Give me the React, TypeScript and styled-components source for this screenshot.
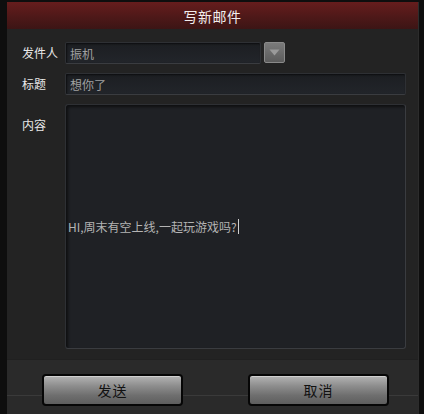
import React from "react";
import styled, { createGlobalStyle } from "styled-components";

const Global = createGlobalStyle`
  html, body { margin: 0; padding: 0; background: #111; }
  body { font-family: "Noto Sans CJK SC", "Liberation Sans", sans-serif; }
`;

const Frame = styled.div`
  width: 424px;
  height: 414px;
  display: flex;
  background: #0e0e0e;
  overflow: hidden;
`;

const Dialog = styled.div`
  margin: 2px 5px 0 7px;
  flex: 1;
  display: flex;
  flex-direction: column;
  background: #232323;
  border-right: 1px solid #2c2c2c;
`;

const TitleBar = styled.div`
  height: 27px;
  flex-shrink: 0;
  display: flex;
  align-items: center;
  justify-content: center;
  background: linear-gradient(#661d1d, #4c1818 60%, #3c1515);
  color: #f2eeee;
  font-size: 14px;
  letter-spacing: 0.5px;
`;

const Body = styled.div`
  flex: 1;
  display: grid;
  grid-template-columns: 58px 1fr;
  grid-template-rows: 22px 22px 1fr;
  row-gap: 9px;
  padding: 13px 12px 10px 0;
`;

const Label = styled.div<{ $top?: number }>`
  color: #e8e8e8;
  font-size: 12px;
  padding-left: 15px;
  padding-top: ${(p) => p.$top ?? 2}px;
`;

const Row = styled.div`
  display: flex;
  gap: 3px;
`;

const Field = styled.div<{ $width?: number }>`
  ${(p) => (p.$width ? `width: ${p.$width}px;` : "flex: 1;")}
  box-sizing: border-box;
  height: 22px;
  background: linear-gradient(#1c1e22, #22252a);
  border: 1px solid #2e3034;
  border-bottom-color: #3a3c40;
  box-shadow: inset 1px 1px 2px rgba(0, 0, 0, 0.6);
  border-radius: 2px;
  color: #a0a0a0;
  font-size: 12px;
  padding-left: 4px;
  display: flex;
  align-items: center;
`;

const DropButton = styled.div`
  width: 21px;
  height: 21px;
  box-sizing: border-box;
  background: linear-gradient(#7a7a7a, #5c5c5c);
  border: 1px solid #8a8a8a;
  border-radius: 2px;
  display: flex;
  align-items: center;
  justify-content: center;
`;

const Content = styled.div`
  box-sizing: border-box;
  background: #1f2125;
  border: 1px solid #2e3034;
  border-right-color: #3a3c40;
  border-bottom-color: #3a3c40;
  box-shadow: inset 2px 2px 3px rgba(0, 0, 0, 0.55);
  border-radius: 3px;
  display: flex;
  align-items: center;
  padding-left: 2px;
  color: #b4b4b4;
  font-size: 12px;
`;

const Caret = styled.span`
  display: inline-block;
  width: 1px;
  height: 15px;
  background: #d0d0d0;
  margin-left: 1px;
`;

const Footer = styled.div`
  height: 55px;
  flex-shrink: 0;
  background: #2a2a2a;
  border-top: 1px solid #202020;
  display: flex;
  justify-content: space-between;
  padding: 14px 29px 0 35px;
  box-sizing: border-box;
  position: relative;
  &::after {
    content: "";
    position: absolute;
    left: 0;
    right: 0;
    bottom: 18px;
    height: 1px;
    background: #3a3a3a;
  }
`;

const Button = styled.div`
  position: relative;
  z-index: 1;
  width: 141px;
  height: 32px;
  box-sizing: border-box;
  border: 2px solid #060606;
  border-radius: 4px;
  background: linear-gradient(#b4b4b4, #8e8e8e 35%, #6e6e6e 70%, #5e5e5e);
  box-shadow: inset 0 1px 0 #d0d0d0;
  display: flex;
  align-items: center;
  justify-content: center;
  color: #111;
  font-size: 14px;
  letter-spacing: 1px;
`;

export default function App() {
  return (
    <Frame>
      <Global />
      <Dialog>
        <TitleBar>写新邮件</TitleBar>
        <Body>
          <Label>发件人</Label>
          <Row>
            <Field $width={196}>振机</Field>
            <DropButton>
              <svg width="11" height="7" viewBox="0 0 11 7">
                <path d="M0.5 0.5 L10.5 0.5 L5.5 6.5 Z" fill="#9a9a9a" />
              </svg>
            </DropButton>
          </Row>
          <Label>标题</Label>
          <Field>想你了</Field>
          <Label $top={12}>内容</Label>
          <Content>
            HI,周末有空上线,一起玩游戏吗?
            <Caret />
          </Content>
        </Body>
        <Footer>
          <Button>发送</Button>
          <Button>取消</Button>
        </Footer>
      </Dialog>
    </Frame>
  );
}
